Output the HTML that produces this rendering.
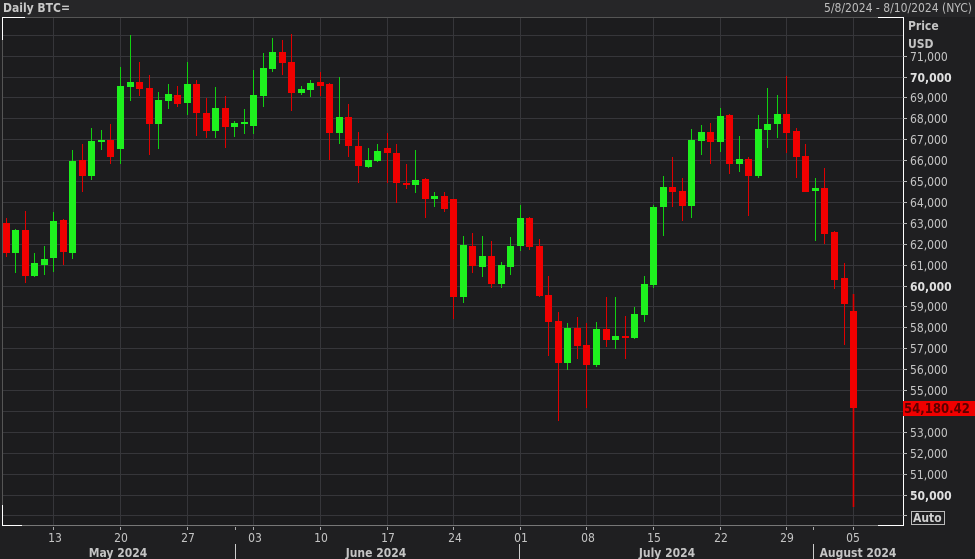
<!DOCTYPE html>
<html><head><meta charset="utf-8"><style>
html,body{margin:0;padding:0;background:#1f1f21;width:975px;height:559px;overflow:hidden}
svg{display:block}
text{font-family:"DejaVu Sans Condensed","Liberation Sans",sans-serif;fill:#c4c4c4;font-size:12px}
</style></head><body>
<svg width="975" height="559" viewBox="0 0 975 559">
<rect width="975" height="559" fill="#1f1f21"/>
<rect x="0" y="0" width="975" height="17" fill="#262628"/>
<rect x="2" y="17" width="901" height="508" fill="#1c1c1e"/>
<g stroke="#36363a" stroke-width="1">
<path d="M2 35.5H903M2 56.5H903M2 77.5H903M2 97.5H903M2 118.5H903M2 139.5H903M2 160.5H903M2 181.5H903M2 202.5H903M2 223.5H903M2 244.5H903M2 265.5H903M2 286.5H903M2 306.5H903M2 327.5H903M2 348.5H903M2 369.5H903M2 390.5H903M2 411.5H903M2 432.5H903M2 453.5H903M2 474.5H903M2 495.5H903M2 515.5H903"/>
<path d="M53.5 17V525M120.5 17V525M187.5 17V525M253.5 17V525M320.5 17V525M387.5 17V525M453.5 17V525M520.5 17V525M586.5 17V525M653.5 17V525M720.5 17V525M786.5 17V525M853.5 17V525"/>
</g>
<path d="M2.5 525V17.5H903" fill="none" stroke="#555" />
<path d="M2.5 525.5H903" stroke="#777"/>
<path d="M2.5 40V17.5H25M2.5 505V525.5H22M878 17.5H903.5V525.5H878" fill="none" stroke="#fff"/>
<!-- red -->
<g stroke="#e00000" fill="#f00000">
<path d="M6.5 218V257M25.5 211V283M63.5 219V265M82.5 144V192M110.5 124V164M139.5 62V96M149.5 75V155M177.5 86V107M196.5 80V136M206.5 98V138M225.5 96V148M282.5 40V75M291.5 34V111M320.5 72V96M329.5 83V160M348.5 104V157M358.5 132V183M387.5 133V183M396.5 144V203M406.5 164V189M425.5 178V218M444.5 192V212M453.5 199V319M472.5 233V273M491.5 241V288M529.5 217V250M539.5 239V297M548.5 276V356M558.5 312V421M577.5 317V359M586.5 323V408M606.5 297V347M625.5 316V359M672.5 157V207M682.5 178V221M710.5 123V164M729.5 114V174M748.5 157V216M786.5 76V153M796.5 128V178M805.5 144V192M824.5 168V244M834.5 231V289M844.5 263V345" fill="none"/>
<path d="M853.5 294V507" fill="none" stroke="#e00000" stroke-width="1.6"/>
<g stroke="none">
<rect x="3" y="223" width="7" height="30"/><rect x="22" y="230" width="7" height="46"/><rect x="60" y="220" width="7" height="32"/><rect x="79" y="160" width="7" height="16"/><rect x="107" y="140" width="7" height="17"/><rect x="136" y="82" width="7" height="7"/><rect x="146" y="88" width="7" height="36"/><rect x="174" y="95" width="7" height="9"/><rect x="193" y="84" width="7" height="29"/><rect x="203" y="113" width="7" height="18"/><rect x="222" y="108" width="7" height="19"/><rect x="279" y="52" width="7" height="11"/><rect x="288" y="62" width="7" height="31"/><rect x="317" y="82" width="7" height="4"/><rect x="326" y="84" width="7" height="49"/><rect x="345" y="117" width="7" height="29"/><rect x="355" y="146" width="7" height="20"/><rect x="384" y="148" width="7" height="5"/><rect x="393" y="153" width="7" height="30"/><rect x="403" y="183" width="7" height="2"/><rect x="422" y="179" width="7" height="20"/><rect x="441" y="196" width="7" height="13"/><rect x="450" y="199" width="7" height="98"/><rect x="469" y="246" width="7" height="20"/><rect x="488" y="256" width="7" height="28"/><rect x="526" y="218" width="7" height="29"/><rect x="536" y="246" width="7" height="50"/><rect x="545" y="295" width="7" height="27"/><rect x="555" y="321" width="7" height="42"/><rect x="574" y="328" width="7" height="18"/><rect x="583" y="345" width="7" height="20"/><rect x="603" y="329" width="7" height="11"/><rect x="622" y="336" width="7" height="2"/><rect x="669" y="187" width="7" height="5"/><rect x="679" y="191" width="7" height="15"/><rect x="707" y="132" width="7" height="10"/><rect x="726" y="115" width="7" height="49"/><rect x="745" y="159" width="7" height="17"/><rect x="783" y="114" width="7" height="19"/><rect x="793" y="131" width="7" height="26"/><rect x="802" y="156" width="7" height="36"/><rect x="821" y="188" width="7" height="46"/><rect x="831" y="232" width="7" height="48"/><rect x="841" y="278" width="7" height="26"/><rect x="850" y="311" width="7" height="97"/>
</g></g>
<!-- green -->
<g stroke="#10d010" fill="#1ef01e">
<path d="M15.5 229V273M34.5 253V277M44.5 246V275M53.5 212V272M72.5 150V259M91.5 128V180M101.5 130V150M120.5 67V164M130.5 35V101M158.5 92V149M168.5 84V109M187.5 62V115M215.5 87V138M234.5 121V137M244.5 109V134M253.5 70V134M263.5 53V107M272.5 38V72M301.5 86V95M310.5 80V97M339.5 77V144M368.5 148V168M377.5 144V162M415.5 150V193M434.5 192V207M463.5 236V303M482.5 236V277M501.5 262V288M510.5 237V275M520.5 205V251M567.5 323V370M596.5 322V367M615.5 297V349M634.5 307V339M644.5 276V322M653.5 205V288M663.5 176V236M691.5 129V218M701.5 125V155M720.5 108V152M739.5 136V172M758.5 115V178M767.5 88V148M777.5 95V138M815.5 178V241" fill="none"/>
<g stroke="none">
<rect x="12" y="230" width="7" height="23"/><rect x="31" y="263" width="7" height="13"/><rect x="41" y="259" width="7" height="6"/><rect x="50" y="221" width="7" height="37"/><rect x="69" y="161" width="7" height="92"/><rect x="88" y="141" width="7" height="35"/><rect x="98" y="140" width="7" height="2"/><rect x="117" y="86" width="7" height="63"/><rect x="127" y="82" width="7" height="5"/><rect x="155" y="100" width="7" height="24"/><rect x="165" y="94" width="7" height="7"/><rect x="184" y="84" width="7" height="19"/><rect x="212" y="108" width="7" height="23"/><rect x="231" y="123" width="7" height="4"/><rect x="241" y="122" width="7" height="2"/><rect x="250" y="95" width="7" height="31"/><rect x="260" y="68" width="7" height="28"/><rect x="269" y="52" width="7" height="17"/><rect x="298" y="89" width="7" height="4"/><rect x="307" y="83" width="7" height="7"/><rect x="336" y="117" width="7" height="16"/><rect x="365" y="160" width="7" height="7"/><rect x="374" y="151" width="7" height="10"/><rect x="412" y="180" width="7" height="5"/><rect x="431" y="196" width="7" height="3"/><rect x="460" y="245" width="7" height="52"/><rect x="479" y="256" width="7" height="11"/><rect x="498" y="265" width="7" height="19"/><rect x="507" y="246" width="7" height="21"/><rect x="517" y="218" width="7" height="28"/><rect x="564" y="328" width="7" height="35"/><rect x="593" y="329" width="7" height="36"/><rect x="612" y="336" width="7" height="4"/><rect x="631" y="314" width="7" height="24"/><rect x="641" y="284" width="7" height="31"/><rect x="650" y="207" width="7" height="78"/><rect x="660" y="187" width="7" height="20"/><rect x="688" y="140" width="7" height="66"/><rect x="698" y="132" width="7" height="9"/><rect x="717" y="116" width="7" height="26"/><rect x="736" y="159" width="7" height="5"/><rect x="755" y="129" width="7" height="47"/><rect x="764" y="124" width="7" height="6"/><rect x="774" y="114" width="7" height="10"/><rect x="812" y="188" width="7" height="3"/>
</g></g>
<!-- header -->
<text x="3" y="12" style="font-weight:bold;font-size:12px;fill:#c8c8c8">Daily BTC=</text>
<text x="972" y="12" text-anchor="end" style="font-size:12px;fill:#bdbdbd">5/8/2024 - 8/10/2024 (NYC)</text>
<!-- price axis -->
<text x="908" y="30" style="font-weight:bold">Price</text>
<text x="908" y="48" style="font-weight:bold">USD</text>
<g stroke="#bbb"><path d="M903 56.5h4M903 77.5h4M903 97.5h4M903 118.5h4M903 139.5h4M903 160.5h4M903 181.5h4M903 202.5h4M903 223.5h4M903 244.5h4M903 265.5h4M903 286.5h4M903 306.5h4M903 327.5h4M903 348.5h4M903 369.5h4M903 390.5h4M903 432.5h4M903 453.5h4M903 474.5h4M903 495.5h4M903 515.5h4"/></g>
<g>
<text x="910" y="61">71,000</text>
<text x="910" y="82" style="font-weight:bold;fill:#e0e0e0">70,000</text>
<text x="910" y="102">69,000</text>
<text x="910" y="123">68,000</text>
<text x="910" y="144">67,000</text>
<text x="910" y="165">66,000</text>
<text x="910" y="186">65,000</text>
<text x="910" y="207">64,000</text>
<text x="910" y="228">63,000</text>
<text x="910" y="249">62,000</text>
<text x="910" y="270">61,000</text>
<text x="910" y="291" style="font-weight:bold;fill:#e0e0e0">60,000</text>
<text x="910" y="311">59,000</text>
<text x="910" y="332">58,000</text>
<text x="910" y="353">57,000</text>
<text x="910" y="374">56,000</text>
<text x="910" y="395">55,000</text>
<text x="910" y="437">53,000</text>
<text x="910" y="458">52,000</text>
<text x="910" y="479">51,000</text>
<text x="910" y="500" style="font-weight:bold;fill:#e0e0e0">50,000</text>
</g>
<rect x="903" y="401" width="72" height="15" fill="#f00000"/>
<text x="904" y="413" style="font-weight:bold;font-size:13px;fill:#5c0000">54,180.42</text>
<rect x="911.5" y="511.5" width="33" height="13" fill="none" stroke="#bbb"/>
<text x="913" y="522" style="font-weight:bold;fill:#d0d0d0">Auto</text>
<!-- date axis -->
<g stroke="#aaa"><path d="M53.5 527v3M120.5 527v3M187.5 527v3M235.5 527v3M253.5 527v3M320.5 527v3M387.5 527v3M453.5 527v3M520.5 527v3M586.5 527v3M653.5 527v3M720.5 527v3M786.5 527v3M813.5 527v3M853.5 527v3"/>
<path d="M235.5 544V559M519.5 544V559M813.5 544V559" stroke="#ccc"/></g>
<g text-anchor="middle">
<text x="55" y="542">13</text><text x="121" y="542">20</text><text x="188" y="542">27</text><text x="255" y="542">03</text><text x="321" y="542">10</text><text x="388" y="542">17</text><text x="455" y="542">24</text><text x="521" y="542">01</text><text x="588" y="542">08</text><text x="654" y="542">15</text><text x="721" y="542">22</text><text x="787" y="542">29</text><text x="853" y="542">05</text>
</g>
<g style="font-weight:bold" text-anchor="middle">
<text x="118" y="557">May 2024</text><text x="376" y="557">June 2024</text><text x="667" y="557">July 2024</text><text x="858" y="557">August 2024</text>
</g>
</svg>
</body></html>
